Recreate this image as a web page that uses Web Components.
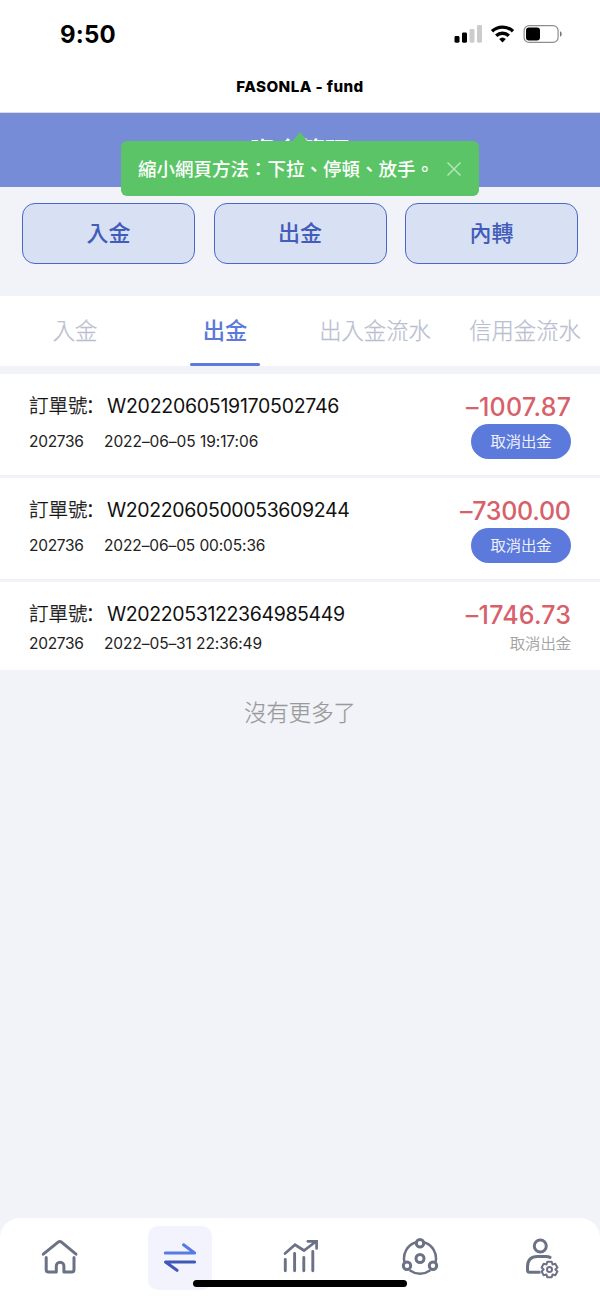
<!DOCTYPE html>
<html lang="zh-Hant">
<head>
<meta charset="utf-8">
<title>FASONLA - fund</title>
<style>
html,body{margin:0;padding:0;background:#f2f3f8}
body{width:600px;height:1298px;overflow:hidden;font-family:Inter,"Noto Sans CJK TC",sans-serif;color:#111}
</style>
</head>
<body>
<fund-app></fund-app>
<script>
const define = (name, html, setup) => customElements.define(name, class extends HTMLElement {
  constructor() {
    super();
    this.attachShadow({ mode: 'open' }).innerHTML = html;
  }
  connectedCallback() { if (setup) setup(this, this.shadowRoot); }
});

define('status-bar', `
<style>
:host{display:flex;justify-content:space-between;height:68px;box-sizing:border-box;padding:0 38px 0 60px;background:#fff}
.time{font:700 24px/69px Inter,sans-serif;color:#000;letter-spacing:.2px}
svg{display:block;margin-top:20px}
</style>
<span class="time">9:50</span>
<svg width="110" height="28" viewBox="452 20 110 28">
  <g><rect x="454.5" y="36" width="5" height="6.7" rx="1.4"/><rect x="462" y="32.5" width="5" height="10.2" rx="1.4"/>
  <rect x="469.5" y="29" width="5" height="13.7" rx="1.4" fill="#ccc"/><rect x="477" y="25" width="5" height="17.7" rx="1.4" fill="#ccc"/></g>
  <g fill="none" stroke="#000" stroke-width="3.3"><path d="M492 31.3a15.2 15.2 0 0 1 21 0"/><path d="M496.2 35.8a9.1 9.1 0 0 1 12.6 0"/></g>
  <path d="M499.2 39.1a4.9 4.9 0 0 1 6.6 0l-3.3 3.3z"/>
  <rect x="524.1" y="25.6" width="34" height="16.8" rx="5" fill="none" stroke="#8d8d8d" stroke-width="1.2"/>
  <rect x="526" y="27.5" width="14" height="13" rx="3"/>
  <path d="M560 31.3c2.3.8 2.3 4.6 0 5.4z" fill="#777"/>
</svg>`);

define('browser-title', `
<style>:host{display:block;height:44px;border-bottom:1px solid #dadbe3;background:#fff;text-align:center;font:800 15.2px/37px Inter,sans-serif;letter-spacing:.42px;color:#000}
span{display:inline-block;white-space:nowrap}</style>
<span><slot></slot></span>`);

define('page-header', `
<style>:host{display:block;height:74px;background:#778cd7;color:#fff;text-align:center;font-weight:500;font-size:25px;line-height:77px}</style>
<slot></slot>`);

define('hint-bubble', `
<style>
:host{position:absolute;left:121px;top:141px;width:358px;height:55px;box-sizing:border-box;border-radius:6px;background:#5bc466;display:flex;align-items:center;padding-left:17px;color:#fff;font-weight:500;font-size:18.5px;white-space:nowrap}
:host::before{content:"";position:absolute;left:171px;top:-9px;border:solid transparent;border-width:0 8px 10px;border-bottom-color:#5bc466}
span{width:308px;padding-bottom:2px}
svg{display:block}
</style>
<span><slot></slot></span>
<svg width="16" height="16" viewBox="0 0 16 16" stroke="#b3e5b8" stroke-width="1.5"><path d="M1.5 1.5l13 13M14.5 1.5l-13 13"/></svg>`);

define('action-button', `
<style>:host{display:block;box-sizing:border-box;height:61px;border:1.5px solid #4d68c4;border-radius:13px;background:#d8e0f3;color:#425cba;text-align:center;font-weight:500;font-size:22px;line-height:59px}</style>
<slot></slot>`);

define('action-row', `
<style>:host{display:grid;grid-template-columns:repeat(3,1fr);gap:18.5px;padding:16px 22px 32px;height:61px}</style>
<slot></slot>`);

define('tab-item', `
<style>
:host{display:flex;flex-direction:column;align-items:center;height:70px;color:#b9bed0;font-size:22.3px;font-weight:300;-webkit-text-stroke:.25px;line-height:69px;white-space:nowrap}
:host([active]){color:#5c79dc;font-weight:500;-webkit-text-stroke:0}
span{height:67px}
i{width:70px;height:3px;border-radius:2px}
:host([active]) i{background:#5c79dc}
</style>
<span><slot></slot></span><i></i>`);

define('tab-row', `
<style>:host{display:grid;grid-template-columns:repeat(4,150px);background:#fff;height:70px;margin-bottom:8px}</style>
<slot></slot>`);

define('order-row', `
<style>
:host{display:flex;justify-content:space-between;box-sizing:border-box;height:101px;margin-bottom:3px;padding:17px 29px 0;background:#fff}
:host([done]){height:88px;margin-bottom:0}
.no{display:flex;height:30px;font-size:19.5px;line-height:30px;color:#111;white-space:nowrap}
.no b{font-weight:300;-webkit-text-stroke:.3px;width:78px;line-height:28px}
.no b span{font-family:"Noto Sans CJK SC",sans-serif;margin-left:-2px}
.meta{display:flex;font-size:15.5px;line-height:24px;margin-top:9px;color:#222;white-space:nowrap}
.meta .acc{width:75px;letter-spacing:-.3px}
.right{display:flex;flex-direction:column;align-items:flex-end}
.amt{font-size:25px;font-weight:500;color:#d7616b;line-height:32px;white-space:nowrap}
.cancel{width:100px;height:35px;border-radius:18px;background:#5c79dc;color:#fff;font-size:15.3px;font-weight:300;-webkit-text-stroke:.2px;line-height:35px;text-align:center;margin-top:1px}
:host([done]) .meta{margin-top:3px}
:host([done]) .cancel{width:auto;background:none;color:#999;height:24px;line-height:24px;margin-top:1px}
</style>
<div><div class="no"><b>訂單號<span lang="zh-Hans">：</span></b><span class="id"></span></div>
<div class="meta"><span class="acc"></span><span class="date"></span></div></div>
<div class="right"><span class="amt"></span><span class="cancel">取消出金</span></div>`,
(el, root) => {
  for (const k of ['id', 'acc', 'date', 'amt']) {
    const s = root.querySelector('.' + k);
    s.textContent = el.getAttribute('data-' + k);
  }
  const sp = el.getAttribute('data-spacing');
  if (sp) {
    const [a, b, c] = sp.split(' ');
    root.querySelector('.id').style.letterSpacing = a + 'px';
    root.querySelector('.date').style.letterSpacing = b + 'px';
    const amt = root.querySelector('.amt');
    amt.style.letterSpacing = c + 'px';
    amt.style.marginRight = -c + 'px';
  }
});

define('list-end', `
<style>:host{display:block;text-align:center;font-size:22.3px;font-weight:300;-webkit-text-stroke:.25px;line-height:30px;margin-top:28px;color:#999}</style>
<slot></slot>`);

define('nav-bar', `
<style>
:host{display:grid;grid-template-columns:repeat(5,120px);height:80px;margin-top:auto;background:#fff;border-radius:20px 20px 0 0;position:relative}
div{display:flex;justify-content:center;padding-top:8px}
span{width:64px;height:64px;border-radius:10px}
.on{background:#f2f3fc}
svg{display:block;width:64px;height:64px;fill:none;stroke:#6c7285;stroke-width:3;stroke-linecap:round;stroke-linejoin:round}
i{position:absolute;left:193px;top:62px;width:214px;height:7px;border-radius:4px;background:#000}
</style>
<div><span><svg viewBox="28 1226 64 64"><path d="M43.3 1254.2L57.8 1242.3q2-1.6 4 0L76 1254.2"/><path d="M46.2 1257.5v12.2q0 2.3 2.3 2.3h7.8v-6a3.8 3.8 0 0 1 7.6 0v6h7.8q2.3 0 2.3-2.3v-12.2"/></svg></span></div>
<div><span class="on"><svg viewBox="148 1226 64 64"><path stroke="#557be3" d="M165.3 1253H194.6L183.5 1244.8"/><path stroke="#4058b5" d="M194.6 1262H165.5L177 1270.3"/></svg></span></div>
<div><span><svg viewBox="268 1226 64 64"><path stroke-width="2.9" d="M285.3 1259.5v11.2M294.6 1253.5v17.2M303.8 1257.5v13.2M312.8 1251.5v19.2"/><path stroke-width="2.7" stroke-linejoin="miter" d="M285 1253.5l10-8.7 9 5.7 12-9M307.8 1241.3h8.8v7.2"/></svg></span></div>
<div><span><svg viewBox="388 1226 64 64"><path stroke-width="2.5" d="M415.5 1242.5A16.7 16.7 0 0 0 404.3 1261.5M424.5 1242.5A16.7 16.7 0 0 1 435.7 1261.5M410.5 1270.8A16.7 16.7 0 0 0 429.5 1270.8"/><circle cx="420" cy="1243.3" r="3.7"/><circle cx="420" cy="1258.5" r="4"/><circle cx="407" cy="1265.7" r="3.7"/><circle cx="433" cy="1265.7" r="3.7"/></svg></span></div>
<div><span><svg viewBox="508 1226 64 64"><circle cx="540.3" cy="1246" r="6"/><path d="M550 1257.4Q548.5 1256.5 546 1256.5H537.5Q527.5 1256.5 527.5 1267V1270.2Q527.5 1272.3 529.7 1272.3H539.2"/><path stroke-width="2" d="M547.3 1261.8h4.4l.8 2.6 2.8-.6 2.1 3.7-2 2 2 2-2.1 3.7-2.8-.6-.8 2.6h-4.4l-.8-2.6-2.8.6-2.1-3.7 2-2-2-2 2.1-3.7 2.8.6z"/><circle cx="549.5" cy="1269.4" r="2.5" stroke-width="2"/></svg></span></div>
<i></i>`);

define('fund-app', `
<style>:host{display:flex;flex-direction:column;position:relative;width:600px;height:1298px;background:#f2f3f8}</style>
<status-bar></status-bar>
<browser-title>FASONLA - fund</browser-title>
<page-header>資金管理</page-header>
<action-row><action-button>入金</action-button><action-button>出金</action-button><action-button>內轉</action-button></action-row>
<tab-row><tab-item>入金</tab-item><tab-item active>出金</tab-item><tab-item>出入金流水</tab-item><tab-item>信用金流水</tab-item></tab-row>
<order-row data-spacing="-.26 -.06 .3" data-id="W2022060519170502746" data-acc="202736" data-date="2022–06–05 19:17:06" data-amt="–1007.87"></order-row>
<order-row data-spacing="-.37 -.11 -.25" data-id="W2022060500053609244" data-acc="202736" data-date="2022–06–05 00:05:36" data-amt="–7300.00"></order-row>
<order-row done data-spacing="-.37 -.09 .2" data-id="W2022053122364985449" data-acc="202736" data-date="2022–05–31 22:36:49" data-amt="–1746.73"></order-row>
<list-end>沒有更多了</list-end>
<nav-bar></nav-bar>
<hint-bubble>縮小網頁方法：下拉、停頓、放手。</hint-bubble>`);
</script>
</body>
</html>
